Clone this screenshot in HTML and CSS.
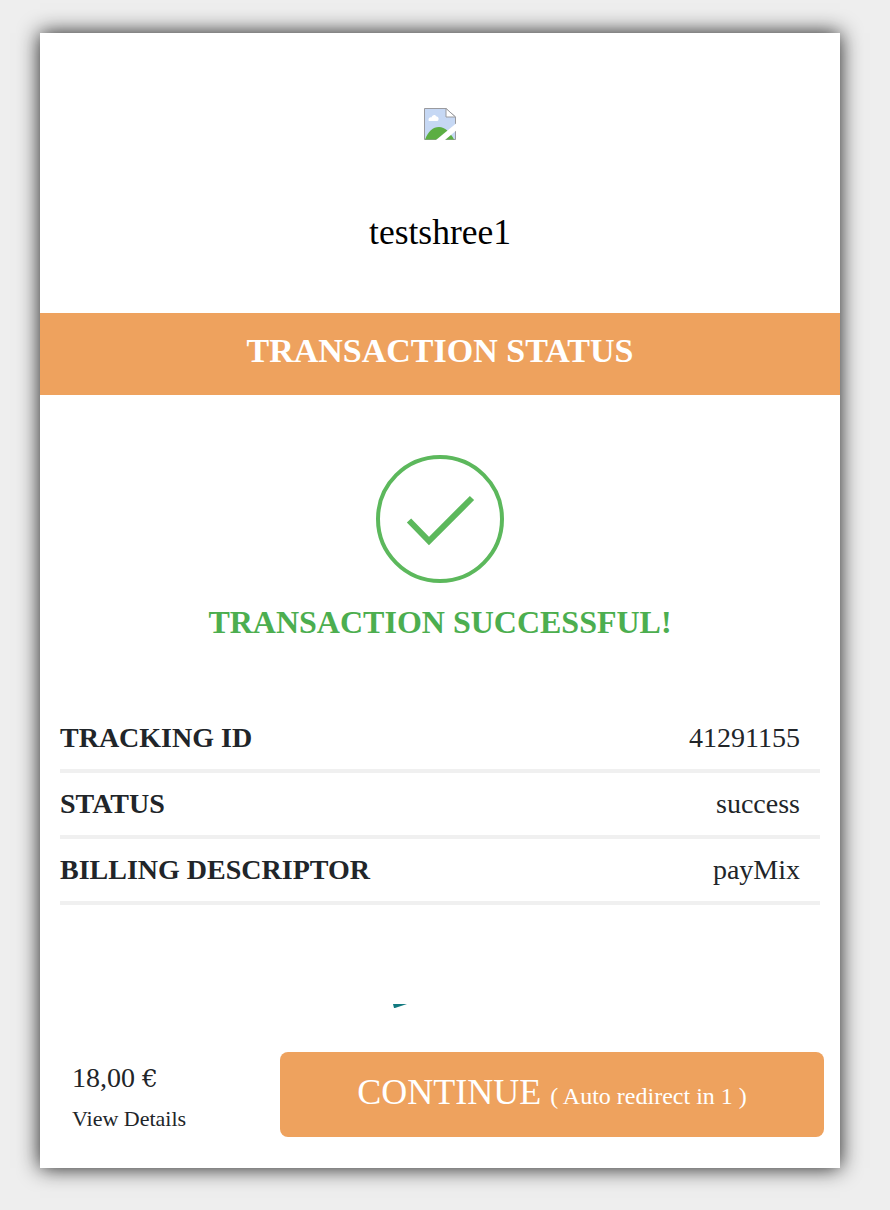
FILE: index.html
```html
<!DOCTYPE html>
<html lang="en">
<head>
  <meta charset="UTF-8" />
  <meta name="viewport" content="width=device-width, initial-scale=1.0" />
  <title>Transaction Status</title>
  <link rel="stylesheet" href="styles.css">
</head>
<body>
  <div class="card">
    <div class="merchant">
      <svg class="broken-img" width="32" height="32" viewBox="0 0 32 32">
        <path d="M0.5 0.5H22L31.5 9V31.5H0.5Z" fill="#c6d8f4" stroke="#9a9a9e"/>
        <path d="M22 0.5V9H31.5Z" fill="#fff" stroke="#9a9a9e"/>
        <path d="M4.5 12c0-2 1.500-3 3-2.500 0.500-3 4-3.500 5-1 1.500 0 2.500 1.500 2 3 0 1-1 1.500-2 1.500H6c-1 0-1.500 0-1.500-1z" fill="#fff"/>
        <path d="M1 31.500c3-8 8-12.500 14-12.500 6 0 11 5 15 12.500z" fill="#5cae43"/>
        <path d="M12 32L32 15.500V22.700L21 32Z" fill="#fff"/>
      </svg>
      <div class="merchant-name">testshree1</div>
    </div>

    <div class="banner">TRANSACTION STATUS</div>

    <div class="result">
      <svg class="check" width="128" height="128" viewBox="0 0 128 128">
        <circle cx="64" cy="64" r="62" fill="none" stroke="#5cb85c" stroke-width="4"/>
        <path d="M33 65.500L53 86L96 43" fill="none" stroke="#5cb85c" stroke-width="6"/>
      </svg>
      <div class="result-text">TRANSACTION SUCCESSFUL!</div>
    </div>

    <div class="details">
      <div class="row"><span class="key">TRACKING ID</span><span class="val">41291155</span></div>
      <div class="row"><span class="key">STATUS</span><span class="val">success</span></div>
      <div class="row"><span class="key">BILLING DESCRIPTOR</span><span class="val">payMix</span></div>
    </div>

    <div class="spinner">
      <svg width="16" height="6" viewBox="0 0 16 6">
        <path d="M0 1H14Q8 3 2 5L1 5Z" fill="#127a80"/>
      </svg>
    </div>

    <div class="footer">
      <div class="amount">
        <div class="price">18,00 <span class="euro">€</span></div>
        <div class="view-details">View Details</div>
      </div>
      <button class="continue" type="button">CONTINUE <small>( Auto redirect in 1 )</small></button>
    </div>
  </div>
</body>
</html>
```

FILE: styles.css
```css
body {
  font-family: "Liberation Serif", "Times New Roman", serif;
  background-color: #eeeeee;
  margin: 0;
  padding: 33px 0 42px 40px;
}

.card {
  background: white;
  width: 800px;
  height: 1135px;
  box-shadow: 0 0 20px rgba(0, 0, 0, 0.9);
  display: flex;
  flex-direction: column;
}

.merchant {
  height: 280px;
  padding-top: 75px;
  box-sizing: border-box;
  text-align: center;
}

.broken-img {
  display: block;
  margin: 0 auto;
}

.merchant-name {
  margin-top: 72px;
  font-size: 35.5px;
  line-height: 40px;
  color: #000;
}

.banner {
  height: 82px;
  line-height: 76px;
  background-color: #eea25e;
  color: white;
  font-size: 34px;
  font-weight: bold;
  text-align: center;
}

.result {
  height: 312px;
  padding-top: 60px;
  box-sizing: border-box;
  text-align: center;
}

.check {
  display: block;
  margin: 0 auto;
}

.result-text {
  margin-top: 19px;
  font-size: 32px;
  line-height: 40px;
  font-weight: bold;
  color: #4cae4f;
}

.details {
  margin: 0 20px;
}

.row {
  display: flex;
  justify-content: space-between;
  align-items: center;
  height: 66px;
  padding: 2px 20px 2px 0;
  box-sizing: border-box;
  border-bottom: 4px solid #f0f0f0;
  font-size: 28px;
  color: #212529;
}

.key {
  font-weight: bold;
}

.spinner {
  height: 103px;
  padding: 98px 0 0 353px;
  box-sizing: border-box;
}

.spinner svg {
  display: block;
}

.footer {
  display: flex;
  align-items: flex-start;
  padding-left: 32px;
  margin-top: 44px;
}

.amount {
  width: 208px;
  color: #212529;
}

.price {
  margin-top: 8px;
  font-size: 28px;
  line-height: 36px;
}

.euro {
  font-family: "DejaVu Serif", serif;
  font-size: 25px;
  line-height: 20px;
}

.view-details {
  margin-top: 9px;
  font-size: 22px;
  line-height: 28px;
}

.continue {
  width: 544px;
  height: 85px;
  background-color: #eea25e;
  color: white;
  border: none;
  border-radius: 8px;
  font-family: inherit;
  font-size: 36px;
  padding: 0 0 6px;
}

.continue small {
  font-size: 24px;
}
```
